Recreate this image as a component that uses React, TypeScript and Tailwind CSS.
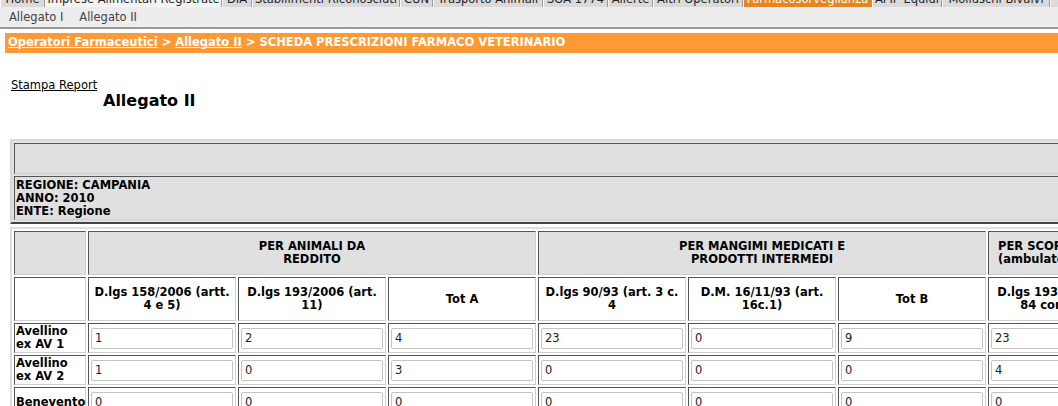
const tabs = [
  { label: "Home", w: "w-[45px]", kind: "gray" },
  { label: "Imprese Alimentari Registrate", w: "w-[177px]", kind: "white" },
  { label: "DIA", w: "w-[30px]", kind: "gray" },
  { label: "Stabilimenti Riconosciuti", w: "w-[148px]", kind: "gray" },
  { label: "CUN", w: "w-[33px]", kind: "gray" },
  { label: "Trasporto Animali", w: "w-[110px]", kind: "gray" },
  { label: "SOA 1774", w: "w-[65px]", kind: "gray" },
  { label: "Allerte", w: "w-[45px]", kind: "gray" },
  { label: "Altri Operatori", w: "w-[90px]", kind: "gray" },
  { label: "Farmacosorveglianza", w: "w-[129px]", kind: "orange" },
  { label: "AFIP Equidi", w: "w-[70px]", kind: "gray" },
  { label: "Molluschi Bivalvi", w: "w-[108px]", kind: "gray" },
  { label: "Altro", w: "w-[60px]", kind: "gray" },
];

const rows = [
  { label: ["Avellino", "ex AV 1"], values: ["1", "2", "4", "23", "0", "9", "23", "50"] },
  { label: ["Avellino", "ex AV 2"], values: ["1", "0", "3", "0", "0", "0", "4", "7"] },
  { label: ["Benevento"], values: ["0", "0", "0", "0", "0", "0", "0", "0"] },
];

const cell = "border border-t-[#555] border-l-[#555] border-r-[#cfcfcf] border-b-[#cfcfcf]";

function Tab({ label, w, kind }: { label: string; w: string; kind: string }) {
  const tone =
    kind === "orange"
      ? "bg-[#e8861e] text-white"
      : kind === "white"
        ? "bg-[#f4f4f4] text-[#222]"
        : "bg-[#dadada] text-[#222]";
  return (
    <div
      className={`${w} ${tone} flex h-[20px] shrink-0 items-end justify-center overflow-hidden border-l border-r border-l-white border-r-[#9a9a9a] pb-[2px] text-[11.5px] leading-none whitespace-nowrap`}
    >
      {label}
    </div>
  );
}

function ValueInput({ value }: { value: string }) {
  return (
    <div className="mx-[2px] flex h-[21px] items-center rounded-[2px] border border-[#c4c4c4] bg-white pl-[3px] text-[11.5px] font-normal text-[#222]">
      {value}
    </div>
  );
}

export default function App() {
  return (
    <div className="h-[406px] w-[1058px] overflow-hidden bg-white font-['DejaVu_Sans',Verdana,sans-serif] text-[11.5px] text-black">
      {/* top tab strip, scrolled so only its lower edge shows */}
      <div className="flex h-[7px] items-end overflow-hidden">
        {tabs.map((t) => (
          <Tab key={t.label} {...t} />
        ))}
      </div>

      <div className="flex h-[22px] items-center gap-[16px] border-b-2 border-[#999] bg-[#ededed] pl-[9px] pt-[1px] text-[11.5px] text-[#444]">
        <span>Allegato I</span>
        <span>Allegato II</span>
      </div>

      <div className="ml-[5px] mt-[4px] flex h-[20px] items-center bg-[#ff9933] pl-[3px] font-bold whitespace-nowrap text-white">
        <span className="underline">Operatori Farmaceutici</span>
        <span className="whitespace-pre">{" > "}</span>
        <span className="underline">Allegato II</span>
        <span className="whitespace-pre">{" > SCHEDA PRESCRIZIONI FARMACO VETERINARIO"}</span>
      </div>

      <div className="pl-[11px] pt-[26px] leading-[13px]">
        <span className="underline">Stampa Report</span>
      </div>
      <h1 className="ml-[103px] mt-[-1px] text-[16px] font-bold leading-[20px]">Allegato II</h1>

      {/* region box */}
      <div className="ml-[10px] mt-[28px] w-[1300px] border-2 border-t-[#d8d8d8] border-l-[#d8d8d8] border-r-[#444] border-b-[#444] bg-[#e0e0e0] p-[2px]">
        <div className={`${cell} h-[31px]`} />
        <div className={`${cell} mt-[2px] h-[44px] pl-[1px] pt-[2px] font-bold leading-[13px]`}>
          <div>REGIONE: CAMPANIA</div>
          <div>ANNO: 2010</div>
          <div>ENTE: Regione</div>
        </div>
      </div>

      {/* data table */}
      <table className="ml-[10px] mt-[3px] w-[1280px] max-w-none table-fixed border-separate border-spacing-[2px] border-2 border-t-[#dddddd] border-l-[#dddddd] border-r-[#555] border-b-[#555] font-bold leading-[13px]">
        <colgroup>
          <col className="w-[72px]" />
          {Array.from({ length: 8 }).map((_, i) => (
            <col key={i} className="w-[148px]" />
          ))}
        </colgroup>
        <tbody>
          <tr className="h-[44px] bg-[#e0e0e0]">
            <td className={cell} />
            <td colSpan={3} className={`${cell} text-center`}>
              PER ANIMALI DA
              <br />
              REDDITO
            </td>
            <td colSpan={3} className={`${cell} text-center`}>
              PER MANGIMI MEDICATI E
              <br />
              PRODOTTI INTERMEDI
            </td>
            <td colSpan={2} className={`${cell} pl-[9px] text-left whitespace-nowrap`}>
              PER SCORTE IMPIANTI
              <br />
              (ambulatori e cliniche)
            </td>
          </tr>
          <tr className="h-[44px] bg-white text-center whitespace-nowrap">
            <td className={cell} />
            <td className={cell}>
              D.lgs 158/2006 (artt.
              <br />4 e 5)
            </td>
            <td className={cell}>
              D.lgs 193/2006 (art.
              <br />
              11)
            </td>
            <td className={cell}>Tot A</td>
            <td className={cell}>
              D.lgs 90/93 (art. 3 c.
              <br />4
            </td>
            <td className={cell}>
              D.M. 16/11/93 (art.
              <br />
              16c.1)
            </td>
            <td className={cell}>Tot B</td>
            <td className={cell}>
              D.lgs 193/2006 (art.
              <br />
              84 comma 1)
            </td>
            <td className={cell}>Tot C</td>
          </tr>
          {rows.map((r) => (
            <tr key={r.label.join(" ")} className="h-[30px] bg-white">
              <td className={`${cell} px-[1px] text-left align-middle`}>
                {r.label.map((l) => (
                  <div key={l}>{l}</div>
                ))}
              </td>
              {r.values.map((v, i) => (
                <td key={i} className={`${cell} align-middle`}>
                  <ValueInput value={v} />
                </td>
              ))}
            </tr>
          ))}
        </tbody>
      </table>
    </div>
  );
}
